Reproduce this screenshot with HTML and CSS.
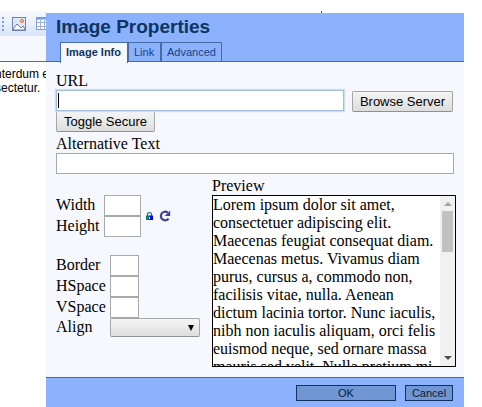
FILE: index.html
```html
<!DOCTYPE html>
<html lang="en">
<head>
<meta charset="utf-8">
<title>Image Properties</title>
<link rel="stylesheet" href="styles.css">
</head>
<body>
<main class="editor">
  <div class="toolbar">
    <span class="grip"></span>
    <svg class="tool" width="14" height="14" viewBox="0 0 14 14"><rect x=".5" y=".5" width="13" height="13" fill="#dce8fa" stroke="#7184a8"/><path d="M1 12 5 7 9 11 11 9 13 12V13H1z" fill="#fff" stroke="#6479ad"/><circle cx="10" cy="4" r="1.6" fill="#f5b183" stroke="#d26b36" stroke-width=".8"/></svg>
    <svg class="tool table" width="14" height="13" viewBox="0 0 14 13"><rect x=".5" y=".5" width="13" height="12" fill="#fff" stroke="#839dce"/><path d="M1 1.5h12" stroke="#6b9cf0" stroke-width="2"/><path d="M1 5.5h12M1 9.5h12M4.5 3v9M8.5 3v9" stroke="#9fb3d9"/></svg>
  </div>
  <div class="toolbar-rest"></div>
  <p class="copy">nterdum e<br>sectetur.</p>
</main>
<i class="tick"></i>
<section class="dialog">
  <header class="head">
    <h1>Image Properties</h1>
    <nav class="tabs">
      <span class="tab active">Image Info</span>
      <span class="tab link">Link</span>
      <span class="tab adv">Advanced</span>
    </nav>
  </header>
  <div class="content">
    <label class="label url-label">URL</label>
    <div class="url-row">
      <div class="field url"><i class="caret"></i></div>
      <button class="btn browse">Browse Server</button>
    </div>
    <button class="btn toggle">Toggle Secure</button>
    <label class="label alt-label">Alternative Text</label>
    <div class="field alt"></div>
    <div class="columns">
      <div class="left">
        <div class="size">
          <span>Width</span><div class="field"></div>
          <span>Height</span><div class="field"></div>
          <div class="icons">
            <svg width="7" height="8" viewBox="0 0 7 8"><path d="M1.5 4V2.2Q1.5.6 3.5.6T5.5 2.2V4" fill="none" stroke="#087c88" stroke-width="1.1"/><path d="M0 3.5h3.5V8H0z" fill="#008080"/><path d="M3.2 3.5H7V8H3.2z" fill="#0000e8"/><path d="M3 5h1v2H3z" fill="#d7ecff"/></svg>
            <svg width="12" height="12" viewBox="0 0 12 12"><path d="M8.8 2.6A4.3 4.3 0 1 0 9.6 8.6" fill="none" stroke="#41419c" stroke-width="2.2"/><path d="M11.2.5v5.5H5.8z" fill="#41419c"/></svg>
          </div>
        </div>
        <div class="spacing">
          <span>Border</span><div class="field"></div>
          <span>HSpace</span><div class="field"></div>
          <span>VSpace</span><div class="field"></div>
          <span>Align</span><div class="btn select"><svg width="6" height="6" viewBox="0 0 6 6"><path d="M0 0h6L3 6z"/></svg></div>
        </div>
      </div>
      <div class="right">
        <label class="label preview-label">Preview</label>
        <div class="preview">
          <div class="lorem">Lorem ipsum dolor sit amet,<br>consectetuer adipiscing elit.<br>Maecenas feugiat consequat diam.<br>Maecenas metus. Vivamus diam<br>purus, cursus a, commodo non,<br>facilisis vitae, nulla. Aenean<br>dictum lacinia tortor. Nunc iaculis,<br>nibh non iaculis aliquam, orci felis<br>euismod neque, sed ornare massa<br>mauris sed velit. Nulla pretium mi</div>
          <div class="scrollbar">
            <svg width="8" height="4" viewBox="0 0 8 4"><path d="M0 4h8L4 0z" fill="#a3a3a3"/></svg>
            <i class="thumb"></i>
            <svg class="down" width="8" height="4" viewBox="0 0 8 4"><path d="M0 0h8L4 4z" fill="#505050"/></svg>
          </div>
        </div>
      </div>
    </div>
  </div>
  <footer class="foot">
    <button class="action ok">OK</button>
    <button class="action cancel">Cancel</button>
  </footer>
</section>
</body>
</html>
```
FILE: styles.css
```css
* { box-sizing: border-box; }
body { margin: 0; width: 482px; height: 407px; overflow: hidden; background: #fff; color: #000; font: 16px/18px "Liberation Serif", serif; }
.editor { width: 46px; height: 407px; padding-top: 11px; overflow: hidden; }
.toolbar { height: 25px; display: flex; padding: 6px 0 0 2px; background: linear-gradient(#f6f8fe, #eaf0fd 45%, #d8e3fa); }
.tool { flex: none; margin-left: 8px; }
.toolbar .table { margin-left: 10px; }
.grip { flex: none; width: 2px; height: 14px; background: repeating-linear-gradient(#7f9fdf 0 2px, transparent 2px 4px); }
.toolbar-rest { height: 26px; background: #f7f8fd; border-bottom: 1px solid #696969; }
.copy { margin: 5px 0 0 -5px; font: 12px/14px "Liberation Sans", sans-serif; white-space: nowrap; }
.tick { position: absolute; left: 321px; top: 11px; width: 1px; height: 2px; background: #555; }
.dialog { position: absolute; left: 46px; top: 13px; width: 418px; height: 394px; display: flex; flex-direction: column; background: #f7f8fd; }
.head { height: 49px; flex: none; padding-left: 10px; background: #8cb2fd; border-bottom: 1px solid #466ca6; }
h1 { margin: 0; height: 28px; padding-top: 3px; color: #0e3460; font: bold 19px/22px "Liberation Sans", sans-serif; }
.tabs { display: flex; align-items: flex-end; height: 21px; padding-left: 4px; }
.tab { height: 20px; border: 1px solid #466ca6; border-bottom: 0; padding-left: 5px; color: #15428b; font: 11px/19px "Liberation Sans", sans-serif; white-space: nowrap; }
.tabs .active { position: relative; width: 68px; height: 21px; margin-bottom: -1px; background: #f7f8fd; color: #0e3460; font-weight: bold; line-height: 19px; }
.link { width: 33px; }
.adv { width: 61px; }
.content { height: 315px; padding: 10px 8px 0 10px; }
.label { display: block; height: 18px; }
.field { height: 21px; background: #fff; border: 1px solid #a9a9a9; }
.url-row { display: flex; gap: 8px; }
.url { width: 288px; padding: 2px 1px; border-color: #a3bedd; box-shadow: 0 0 1px 1px #c7def5; }
.caret { display: block; width: 1px; height: 15px; background: #000; }
.btn { display: block; padding: 0; height: 21px; border: 1px solid #a6a6a6; border-bottom-color: #909090; border-radius: 2px; background: linear-gradient(#f5f5f5, #dddddd); color: #000; font: 13px/18px "Liberation Sans", sans-serif; white-space: nowrap; }
.browse { width: 101px; margin-top: 1px; }
.toggle { width: 99px; margin-top: -1px; }
.alt-label { margin-top: 3px; }
.alt { width: 398px; }
.columns { display: flex; gap: 8px; }
.left { width: 148px; padding-top: 21px; }
.size { display: grid; grid-template: 21px 21px / 37px 37px; column-gap: 11px; height: 42px; line-height: 20px; }
.icons { grid-column: 3; grid-row: 1 / 3; display: flex; align-items: center; gap: 6px; margin-left: -6px; }
.spacing { display: grid; grid-template: 21px 21px 21px 19px / 54px 29px; margin-top: 18px; line-height: 20px; }
.select { width: 90px; height: 19px; display: flex; align-items: center; justify-content: flex-end; padding-right: 5px; }
.spacing span:last-of-type { line-height: 18px; }
.right { width: 244px; padding-top: 3px; }
.preview { width: 244px; height: 172px; display: flex; overflow: hidden; border: 1px solid #000; background: #fff; }
.lorem { width: 227px; white-space: nowrap; }
.scrollbar { width: 15px; height: 170px; display: flex; flex-direction: column; align-items: center; padding: 6px 0; background: #f1f1f1; }
.thumb { width: 11px; height: 41px; margin-top: 5px; background: #c1c1c1; }
.down { margin-top: auto; }
.foot { height: 30px; display: flex; justify-content: flex-end; gap: 9px; padding: 7px 11px 0 0; border-top: 1px solid #466ca6; background: #8cb2fd; }
.action { height: 16px; padding: 0; border: 1px solid #15325f; background: #7096d3; color: #0a1c3e; font: 11px/14px "Liberation Sans", sans-serif; }
.ok { width: 100px; }
.cancel { width: 48px; }
```
